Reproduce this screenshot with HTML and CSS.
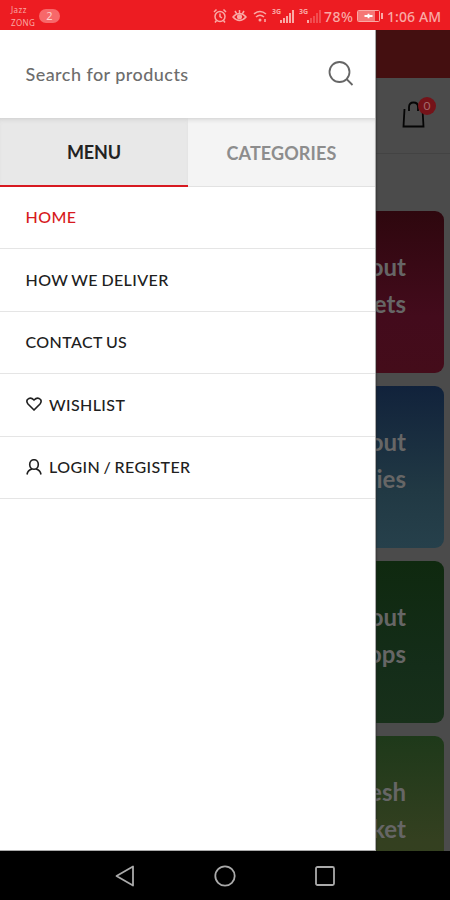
FILE: index.html
```html
<!DOCTYPE html>
<html lang="en">
<head>
<meta charset="utf-8">
<title>Store menu</title>
<link rel="stylesheet" href="styles.css">
</head>
<body>
<div class="phone">
  <header class="status">
    <div class="carriers"><span>Jazz</span><span>ZONG</span></div>
    <span class="notices">2</span>
    <div class="indicators">
      <svg class="alarm" width="14" height="16" viewBox="0 0 14 16" fill="none" stroke="currentColor" stroke-width="1.500"><circle cx="7" cy="8.500" r="5"/><path d="M7 5.500v3l2 1.500M1 4l2.500-2.500M13 4l-2.500-2.500M3.500 12.500L2 14.500M10.500 12.500L12 14.500"/></svg>
      <svg class="eye" width="15" height="14" viewBox="0 0 15 14" fill="none" stroke="currentColor" stroke-width="1.500"><path d="M1 8q6.500-7 13 0q-6.500 7-13 0zM7.500 1v3M3 2l1.500 2.500M12 2l-1.500 2.500"/><circle cx="7.500" cy="7.800" r="1.800" fill="currentColor"/></svg>
      <svg class="wifi" width="15" height="14" viewBox="0 0 15 14" fill="none" stroke="currentColor" stroke-width="1.600"><path d="M1 5q6-5 12 0M3 8q4-3.500 8 0"/><circle cx="7" cy="11" r="1.500" fill="currentColor" stroke="none"/><path d="M12 10v3"/></svg>
      <svg class="signal" width="23" height="16" viewBox="0 0 23 16" fill="currentColor"><text x="0" y="6" font-size="7" font-weight="700">3G</text><path d="M8 12h2v3H8zM11 10h2v5h-2zM14 8h2v7h-2zM17 5h2v10h-2zM20 2h2v13h-2z"/></svg>
      <svg class="signal second" width="23" height="16" viewBox="0 0 23 16" fill="currentColor"><text x="0" y="6" font-size="7" font-weight="700">3G</text><path d="M8 12h2v3H8z"/><path opacity=".35" d="M11 10h2v5h-2zM14 8h2v7h-2zM17 5h2v10h-2zM20 2h2v13h-2z"/></svg>
      <span class="percent">78%</span>
      <svg class="battery" width="26" height="12" viewBox="0 0 26 12"><rect x=".5" y=".5" width="22" height="11" rx="1" fill="none" stroke="currentColor"/><path fill="currentColor" opacity=".65" d="M1 1h17v10H1z"/><path fill="currentColor" d="M24 3h2v6h-2z"/><path d="M7.500 6h8M11.500 3.800v4.400" stroke="#fff" stroke-width="1.800"/></svg>
      <span class="time">1:06 AM</span>
    </div>
  </header>

  <div class="screen">
    <main class="shop">
      <div class="brandbar"></div>
      <div class="shopbar">
        <div class="cart">
          <svg width="24" height="28" viewBox="0 0 24 28" fill="none" stroke="#050505" stroke-width="1.800"><path d="M2.500 8L1.500 25.500h20L20.500 8M7 10V6q0-4.500 4.500-4.500t4.500 4.500v4"/></svg>
          <span class="count">0</span>
        </div>
      </div>
      <div class="cards">
        <article class="card berry"><p>About<br>Outlets</p></article>
        <article class="card ocean"><p>About<br>Supplies</p></article>
        <article class="card forest"><p>About<br>Shops</p></article>
        <article class="card olive"><p>Fresh<br>Market</p></article>
      </div>
    </main>

    <aside class="drawer">
      <div class="search">
        <span>Search for products</span>
        <svg width="26" height="26" viewBox="0 0 26 26" fill="none" stroke="#666" stroke-width="1.800"><circle cx="11.500" cy="11" r="10"/><path d="M18.500 18l6 6"/></svg>
      </div>
      <div class="tabs">
        <span class="tab active">MENU</span>
        <span class="tab">CATEGORIES</span>
      </div>
      <nav class="menu">
        <a class="current">HOME</a>
        <a>HOW WE DELIVER</a>
        <a>CONTACT US</a>
        <a><svg width="16" height="14" viewBox="0 0 16 14" fill="none" stroke="currentColor" stroke-width="1.600"><path d="M8 13L2 7Q0 4.500 1.500 2.500Q4.500-.5 8 3Q11.500-.5 14.500 2.500Q16 4.500 14 7z"/></svg>WISHLIST</a>
        <a><svg width="16" height="16" viewBox="0 0 16 16" fill="none" stroke="currentColor" stroke-width="1.600"><ellipse cx="8" cy="5.500" rx="4.300" ry="4.800"/><path d="M1 15.500q.8-4.500 5-5.500M15 15.500q-.8-4.500-5-5.500"/></svg>LOGIN / REGISTER</a>
      </nav>
    </aside>
  </div>

  <footer class="softkeys">
    <svg width="20" height="22" viewBox="0 0 20 22"><path d="M18 1.500v19L1.500 11z"/></svg>
    <svg width="22" height="22" viewBox="0 0 22 22"><circle cx="11" cy="11" r="9.700"/></svg>
    <svg width="20" height="20" viewBox="0 0 20 20"><rect x="1" y="1" width="18" height="18" rx="1.500"/></svg>
  </footer>
</div>
</body>
</html>
```
FILE: styles.css
```css
* { box-sizing: border-box; }
body { margin: 0; font-family: Lato, sans-serif; }
.phone { width: 450px; height: 900px; display: flex; flex-direction: column; overflow: hidden; }
svg { flex: none; display: block; }

.status { height: 30px; background: #ed1c22; color: #f9a9a5; display: flex; align-items: center; padding: 2px 8px 0 11px; font-family: "Noto Sans", sans-serif; }
.carriers { width: 28px; display: flex; flex-direction: column; font-size: 8px; line-height: 13px; letter-spacing: .4px; padding-bottom: 1px; }
.notices { width: 21px; height: 14px; border-radius: 7px; background: #f7686a; color: #ffd0cd; font-size: 11px; line-height: 14px; text-align: center; }
.indicators { margin-left: auto; display: flex; align-items: center; white-space: nowrap; }
.alarm { margin-right: 5px; }
.eye { margin-right: 6px; }
.wifi { margin-right: 4px; }
.second { margin-left: 4px; }
.percent { width: 33px; margin-left: 2px; font-size: 14px; letter-spacing: .5px; font-weight: 500; }
.battery { margin-right: 4px; }
.time { width: 55px; font-size: 14px; letter-spacing: .1px; font-weight: 500; }

.screen { flex: 1; min-height: 0; position: relative; overflow: hidden; background: #4b4b4b; }
.shop { height: 100%; display: flex; flex-direction: column; }
.brandbar { height: 48px; flex: none; background: #440f10; }
.shopbar { height: 76px; flex: none; display: flex; justify-content: flex-end; padding: 23px 24px 0 0; border-bottom: 1px solid #434343; }
.cart { position: relative; width: 24px; height: 28px; }
.count { position: absolute; left: 16px; top: -4px; width: 18px; height: 18px; border-radius: 50%; background: #751319; color: #a36a6c; font-size: 12px; line-height: 18px; text-align: center; }
.cards { padding: 57px 6px 0; display: flex; flex-direction: column; gap: 13px; }
.card { height: 162px; flex: none; border-radius: 9px; padding: 37px 38px 0; }
.card p { margin: 0; font-size: 24px; line-height: 37px; font-weight: 700; text-align: right; color: #666; }
.berry { background: linear-gradient(#2e070e, #430b1c 65%, #440c1a); }
.ocean { background: linear-gradient(#11223b, #213944 65%, #26404b); }
.forest { background: linear-gradient(#0f290f, #142d19 65%, #18301a); }
.olive { background: linear-gradient(#1e391a, #344020 65%, #34411f); }

.drawer { position: absolute; left: 0; top: 0; width: 376px; height: 100%; background: #fff; border-right: 1px solid #aaa; border-bottom: 1px solid #aaa; box-shadow: 0 0 2px #222; }
.search { height: 88px; display: flex; align-items: center; justify-content: space-between; padding: 0 21px 0 25.500px; font-size: 18px; font-weight: 500; letter-spacing: .45px; color: #6d6d6d; }
.tabs { height: 68.500px; display: grid; grid-template-columns: 188px 1fr; box-shadow: inset 0 4px 5px -3px #ccc; background: #f4f4f4; border-bottom: 1px solid #e2e2e2; }
.tab { display: flex; align-items: center; justify-content: center; font-size: 18px; font-weight: 700; color: #8d8d8d; letter-spacing: .1px; }
.tab.active { height: 69px; background: #e8e8e8; color: #222; border-bottom: 2px solid #d71920; box-shadow: inset 0 4px 5px -3px #ccc; letter-spacing: -.1px; }
.menu { display: flex; flex-direction: column; }
.menu a { height: 62.500px; border-bottom: 1px solid #e5e5e5; padding: 0 0 1px 25.500px; display: flex; align-items: center; gap: 7.500px; color: #202020; font-size: 16px; font-weight: 500; letter-spacing: .4px; word-spacing: -1px; }
.menu .current { color: #d71920; }

.softkeys { height: 49px; background: #000; display: flex; align-items: center; justify-content: center; gap: 79px; }
.softkeys svg { fill: none; stroke: #aaa; stroke-width: 1.800; stroke-linejoin: round; }
```
